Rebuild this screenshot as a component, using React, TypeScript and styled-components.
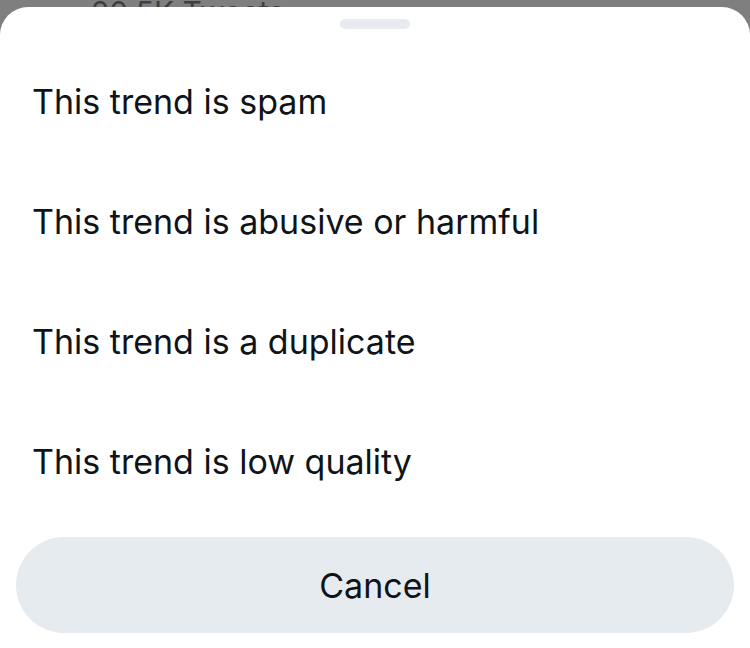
import * as React from "react";
import styled, { createGlobalStyle } from "styled-components";

const GlobalStyle = createGlobalStyle`
    html, body {
        margin: 0;
        padding: 0;
        background: #7f7f7f;
    }
    body {
        font-family: Inter, "Noto Sans", "Liberation Sans", sans-serif;
        -webkit-font-smoothing: antialiased;
    }
`;

const Screen = styled.div`
    width: 750px;
    height: 648px;
    display: flex;
    flex-flow: column;
    overflow: hidden;
    background: #7f7f7f;
`;

// the timeline behind the sheet, dimmed and mostly covered
const Backdrop = styled.div`
    height: 7px;
    flex: none;
    overflow: hidden;
    padding-left: 91px;
`;

const BackdropText = styled.span`
    display: block;
    margin-top: -6px;
    font-size: 30px;
    line-height: 36px;
    color: #3f3f3f;
`;

const Sheet = styled.div`
    flex: 1;
    display: flex;
    flex-flow: column;
    background: #ffffff;
    border-radius: 28px 28px 0 0;
    padding: 0 16px 15px;
`;

const HandleWrap = styled.div`
    height: 34px;
    display: flex;
    justify-content: center;
    padding-top: 12px;
    box-sizing: border-box;
`;

const Handle = styled.div`
    width: 70px;
    height: 10px;
    border-radius: 5px;
    background: #e7ebef;
`;

const Options = styled.ul`
    list-style: none;
    margin: 0;
    padding: 0;
`;

const Option = styled.li`
    height: 120px;
    display: flex;
    align-items: center;
    padding-left: 16px;
    font-size: 34px;
    color: #0f1419;
    cursor: pointer;
`;

const CancelBtn = styled.button`
    margin-top: 16px;
    height: 96px;
    border: none;
    border-radius: 48px;
    background: #e6ebf0;
    font-family: inherit;
    font-size: 34px;
    color: #0f1419;
    cursor: pointer;
`;

const reasons = [
    "This trend is spam",
    "This trend is abusive or harmful",
    "This trend is a duplicate",
    "This trend is low quality",
];

export default function App() {
    return (
        <Screen>
            <GlobalStyle />
            <Backdrop>
                <BackdropText>20.5K Tweets</BackdropText>
            </Backdrop>
            <Sheet>
                <HandleWrap>
                    <Handle />
                </HandleWrap>
                <Options>
                    {reasons.map((reason) => (
                        <Option key={reason}>{reason}</Option>
                    ))}
                </Options>
                <CancelBtn>Cancel</CancelBtn>
            </Sheet>
        </Screen>
    );
}
